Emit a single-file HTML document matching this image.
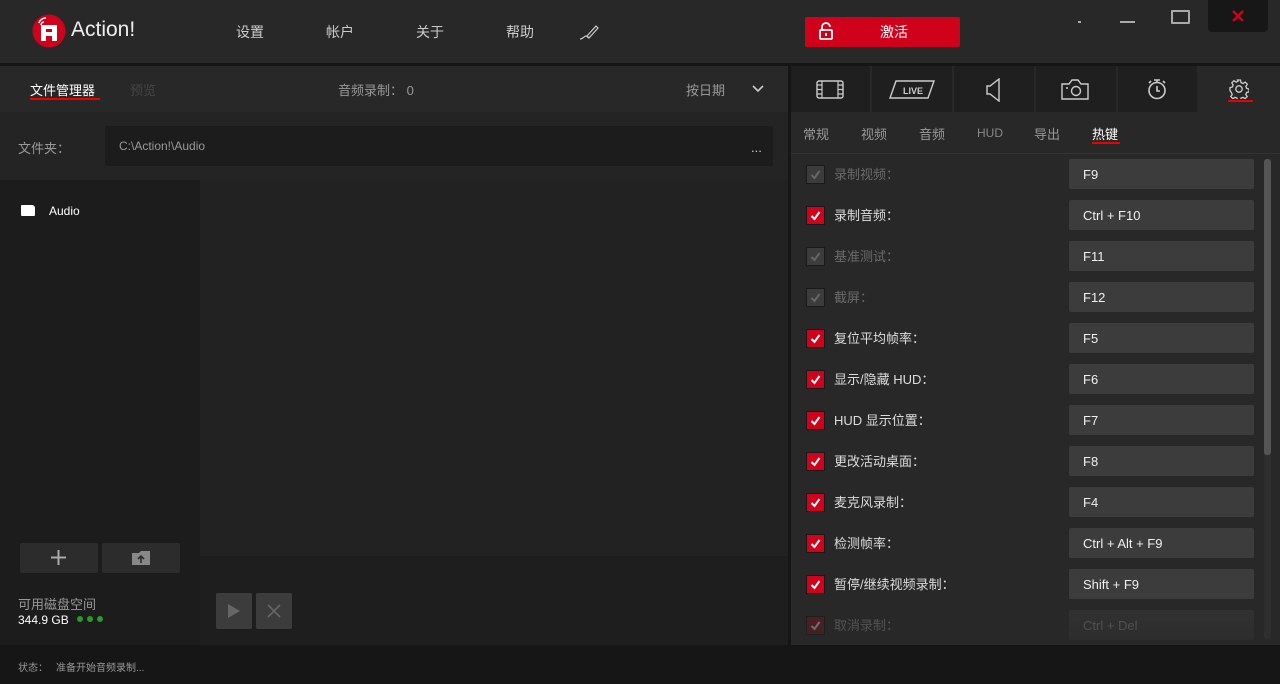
<!DOCTYPE html>
<html><head><meta charset="utf-8"><style>
*{margin:0;padding:0;box-sizing:border-box}
body{width:1280px;height:684px;overflow:hidden;background:#242424;font-family:"Liberation Sans","Noto Sans CJK SC",sans-serif;color:#ccc;position:relative}
.a{position:absolute}
.t{font-size:13px;white-space:nowrap}
.cb{position:absolute;left:806px;width:19px;height:19px;background:#1a1a1a;padding:1px}
.cb i{display:block;width:17px;height:17px;background:#d0021b;position:relative}
.cb.d i{background:#3c3c3c}
.cb.x i{background:#5a1a22}
.cb svg{position:absolute;left:3px;top:3px}
.lbl{position:absolute;left:834px;font-size:13px;color:#ddd}
.lbl.d{color:#6a6a6a}
.in{position:absolute;left:1069px;width:185px;height:30px;background:#3c3c3c;border-radius:2px;font-size:13px;color:#f0f0f0;padding:9px 14px;line-height:14px}
</style></head><body>
<div class="a" style="left:0;top:0;width:1280px;height:63px;background:#282828"></div>
<div class="a" style="left:0;top:63px;width:1280px;height:3px;background:#161616"></div>
<svg class="a" style="left:32px;top:14px" width="34" height="34" viewBox="0 0 34 34"><circle cx="17" cy="17" r="16.5" fill="#d0021b"/><path d="M9 27V11h16v16h-5v-5h-6v5z" fill="#fff"/><rect x="14" y="15" width="6" height="3" fill="#d0021b"/><path d="M7 9a7 7 0 0 1 7-5M9 11a3 3 0 0 1 3-3" stroke="#fff" stroke-width="1.5" fill="none"/></svg>
<div class="a" style="left:71px;top:18px;font-size:21px;color:#eee">Action!</div>
<div class="a t" style="left:236px;top:22px;font-size:14px">设置</div>
<div class="a t" style="left:326px;top:22px;font-size:14px">帐户</div>
<div class="a t" style="left:416px;top:22px;font-size:14px">关于</div>
<div class="a t" style="left:506px;top:22px;font-size:14px">帮助</div>
<svg class="a" style="left:579px;top:22px" width="22" height="20"><path d="M1 17c3 0 4-3 6-3s1 3 4 1M8 14l9-10 2 2-9 10z" stroke="#ccc" stroke-width="1.2" fill="none"/></svg>
<div class="a" style="left:805px;top:17px;width:155px;height:30px;background:#d0021b;border-radius:2px"></div>
<svg class="a" style="left:819px;top:21px" width="14" height="20"><path d="M3 9V6a4 4 0 0 1 8 0" stroke="#fff" stroke-width="1.8" fill="none"/><rect x="1" y="9" width="12" height="9" rx="1" stroke="#fff" stroke-width="1.8" fill="none"/><rect x="6" y="12" width="2" height="3" fill="#fff"/></svg>
<div class="a t" style="left:880px;top:22px;font-size:14px;color:#fff">激活</div>
<div class="a" style="left:1078px;top:21px;width:3px;height:2px;background:#aaa"></div>
<div class="a" style="left:1120px;top:21px;width:15px;height:2px;background:#aaa"></div>
<div class="a" style="left:1171px;top:10px;width:19px;height:14px;border:2px solid #aaa;border-radius:1px"></div>
<div class="a" style="left:1208px;top:0;width:60px;height:32px;background:#171717;border-radius:0 0 4px 4px"></div>
<svg class="a" style="left:1232px;top:10px" width="12" height="12"><path d="M1 1l10 10M11 1L1 11" stroke="#d0021b" stroke-width="2.4"/></svg>

<div class="a" style="left:0;top:66px;width:788px;height:46px;background:#282828"></div>
<div class="a t" style="left:30px;top:80px;color:#fff">文件管理器</div>
<div class="a" style="left:30px;top:98px;width:70px;height:2px;background:#e00"></div>
<div class="a t" style="left:130px;top:80px;color:#444">预览</div>
<div class="a t" style="left:338px;top:80px;color:#999">音频录制： 0</div>
<div class="a t" style="left:686px;top:80px;color:#999">按日期</div>
<svg class="a" style="left:752px;top:85px" width="12" height="8"><path d="M1 1l5 5 5-5" stroke="#ccc" stroke-width="1.6" fill="none"/></svg>
<div class="a t" style="left:18px;top:138px;color:#999">文件夹：</div>
<div class="a" style="left:105px;top:126px;width:668px;height:40px;background:#1c1c1c;border-radius:2px"></div>
<div class="a t" style="left:119px;top:139px;color:#999;font-size:12px">C:\Action!\Audio</div>
<div class="a t" style="left:751px;top:140px;color:#ccc">...</div>
<div class="a" style="left:0;top:180px;width:200px;height:465px;background:#1c1c1c"></div>
<div class="a" style="left:21px;top:205px;width:14px;height:11px;background:#fff;border-radius:1px 3px 1px 1px"></div>
<div class="a t" style="left:49px;top:204px;color:#fff;font-size:12px">Audio</div>
<div class="a" style="left:20px;top:543px;width:78px;height:30px;background:#2c2c2c;border-radius:2px"></div>
<svg class="a" style="left:51px;top:550px" width="15" height="15"><path d="M7.5 0v15M0 7.5h15" stroke="#aaa" stroke-width="2"/></svg>
<div class="a" style="left:102px;top:543px;width:78px;height:30px;background:#2c2c2c;border-radius:2px"></div>
<svg class="a" style="left:132px;top:551px" width="18" height="14"><path d="M0 2h7l2-2h9v14H0z" fill="#888"/><path d="M9 12V6M6 8l3-3 3 3" stroke="#2c2c2c" stroke-width="1.6" fill="none"/></svg>
<div class="a t" style="left:18px;top:594px;color:#999">可用磁盘空间</div>
<div class="a t" style="left:18px;top:613px;color:#fff;font-size:12px">344.9 GB</div>
<div class="a" style="left:77px;top:616px;width:6px;height:6px;border-radius:50%;background:#2a9a2a;box-shadow:10px 0 #2a9a2a,20px 0 #2a9a2a"></div>
<div class="a" style="left:200px;top:180px;width:588px;height:376px;background:#222"></div>
<div class="a" style="left:200px;top:556px;width:588px;height:89px;background:#1e1e1e"></div>
<div class="a" style="left:216px;top:593px;width:36px;height:36px;background:#3c3c3c;border-radius:2px"></div>
<svg class="a" style="left:227px;top:603px" width="14" height="16"><path d="M1 1l12 7-12 7z" fill="#666"/></svg>
<div class="a" style="left:256px;top:593px;width:36px;height:36px;background:#3c3c3c;border-radius:2px"></div>
<svg class="a" style="left:267px;top:604px" width="14" height="14"><path d="M1 1l12 12M13 1L1 13" stroke="#666" stroke-width="1.6"/></svg>

<div class="a" style="left:788px;top:66px;width:3px;height:579px;background:#161616"></div>
<div class="a" style="left:791px;top:66px;width:489px;height:579px;background:#282828"></div>
<div class="a" style="left:791px;top:66px;width:406px;height:46px;background:#1f1f1f"></div>
<div class="a" style="left:870px;top:66px;width:2px;height:46px;background:#282828"></div>
<div class="a" style="left:952px;top:66px;width:2px;height:46px;background:#282828"></div>
<div class="a" style="left:1034px;top:66px;width:2px;height:46px;background:#282828"></div>
<div class="a" style="left:1116px;top:66px;width:2px;height:46px;background:#282828"></div>
<svg class="a" style="left:816px;top:80px" width="28" height="20"><rect x="1" y="1" width="26" height="17" rx="2" stroke="#ccc" stroke-width="1.4" fill="none"/><path d="M6 1v17M22 1v17M1 5h5M1 9.5h5M1 14h5M22 5h5M22 9.5h5M22 14h5" stroke="#ccc" stroke-width="1.2"/></svg>
<svg class="a" style="left:889px;top:80px" width="46" height="19"><path d="M7 1h38l-6 17H1z" stroke="#ccc" stroke-width="1.4" fill="none"/><text x="14" y="14" font-family="Liberation Sans" font-size="9" font-weight="bold" fill="#ccc">LIVE</text></svg>
<svg class="a" style="left:985px;top:78px" width="18" height="24"><path d="M5 8h-3v8h3l9 7V1z" stroke="#ccc" stroke-width="1.4" fill="none"/></svg>
<svg class="a" style="left:1061px;top:78px" width="28" height="22"><path d="M1 6h7l3-4h6l3 4h7v15H1z" stroke="#ccc" stroke-width="1.4" fill="none"/><circle cx="15" cy="13" r="4.5" stroke="#ccc" stroke-width="1.4" fill="none"/><circle cx="6" cy="10" r="1" fill="#ccc"/></svg>
<svg class="a" style="left:1146px;top:78px" width="22" height="22"><circle cx="11" cy="12.5" r="8" stroke="#ccc" stroke-width="1.6" fill="none"/><path d="M8 2h6M11 2v3M11 8v5h3M3 5l2-2M19 5l-2-2" stroke="#ccc" stroke-width="1.6" fill="none"/></svg>
<svg class="a" style="left:1229px;top:79px" width="20" height="20" viewBox="0 0 20 20"><path d="M8.5 1h3l.5 2.5 2 1 2.2-1.4 2.1 2.1-1.4 2.2.8 2 2.3.6v3l-2.4.5-.8 2 1.4 2.1-2.1 2.1-2.1-1.4-2 .8-.5 2.4h-3l-.5-2.4-2-.8-2.1 1.4-2.1-2.1 1.4-2.1-.8-2L1 11.6v-3l2.4-.6.8-2-1.4-2.2 2.1-2.1 2.2 1.4 2-1z" stroke="#ccc" stroke-width="1.3" fill="none"/><circle cx="10" cy="10" r="3.2" stroke="#ccc" stroke-width="1.3" fill="none"/></svg>
<div class="a" style="left:1228px;top:100px;width:25px;height:2px;background:#e00"></div>
<div class="a t" style="left:803px;top:124px;color:#999">常规</div>
<div class="a t" style="left:861px;top:124px;color:#999">视频</div>
<div class="a t" style="left:919px;top:124px;color:#999">音频</div>
<div class="a t" style="left:977px;top:126px;color:#888;font-size:12px">HUD</div>
<div class="a t" style="left:1034px;top:124px;color:#999">导出</div>
<div class="a t" style="left:1092px;top:124px;color:#fff">热键</div>
<div class="a" style="left:1092px;top:142px;width:28px;height:2px;background:#e00"></div>
<div class="a" style="left:791px;top:153px;width:489px;height:1px;background:#333"></div>
<div class="a" style="left:1264px;top:159px;width:7px;height:480px;background:#2f2f2f;border-radius:3px"></div>
<div class="a" style="left:1264px;top:159px;width:7px;height:296px;background:#555;border-radius:3px"></div>

<div id="rows"></div>
<script>
var R=[["录制视频：","F9","d"],["录制音频：","Ctrl + F10",""],["基准测试：","F11","d"],["截屏：","F12","d"],["复位平均帧率：","F5",""],["显示/隐藏 HUD：","F6",""],["HUD 显示位置：","F7",""],["更改活动桌面：","F8",""],["麦克风录制：","F4",""],["检测帧率：","Ctrl + Alt + F9",""],["暂停/继续视频录制：","Shift + F9",""],["取消录制：","Ctrl + Del","x"]];
var h="";R.forEach(function(r,i){var y=174+41*i;var chk='<svg width="11" height="11"><path d="M1.5 6l3 3 5-7" stroke="'+(r[2]=="d"?"#666":(r[2]=="x"?"#999":"#fff"))+'" stroke-width="2" fill="none"/></svg>';
h+='<div class="cb '+r[2]+'" style="top:'+(y-9)+'px"><i>'+chk+'</i></div><div class="lbl '+(r[2]?"d":"")+'" style="top:'+(y-10)+'px">'+r[0]+'</div><div class="in" style="top:'+(y-15)+'px;'+(r[2]=="x"?"color:#666;background:#333":"")+'">'+r[1]+'</div>';});
document.getElementById("rows").innerHTML=h;
</script>
<div class="a" style="left:791px;top:595px;width:470px;height:50px;background:linear-gradient(rgba(40,40,40,0),rgba(40,40,40,.6))"></div>
<div class="a" style="left:0;top:645px;width:1280px;height:39px;background:#161616"></div>
<div class="a t" style="left:18px;top:659px;font-size:10px;color:#999">状态：</div>
<div class="a t" style="left:56px;top:659px;font-size:10px;color:#999">准备开始音频录制...</div>
</body></html>
